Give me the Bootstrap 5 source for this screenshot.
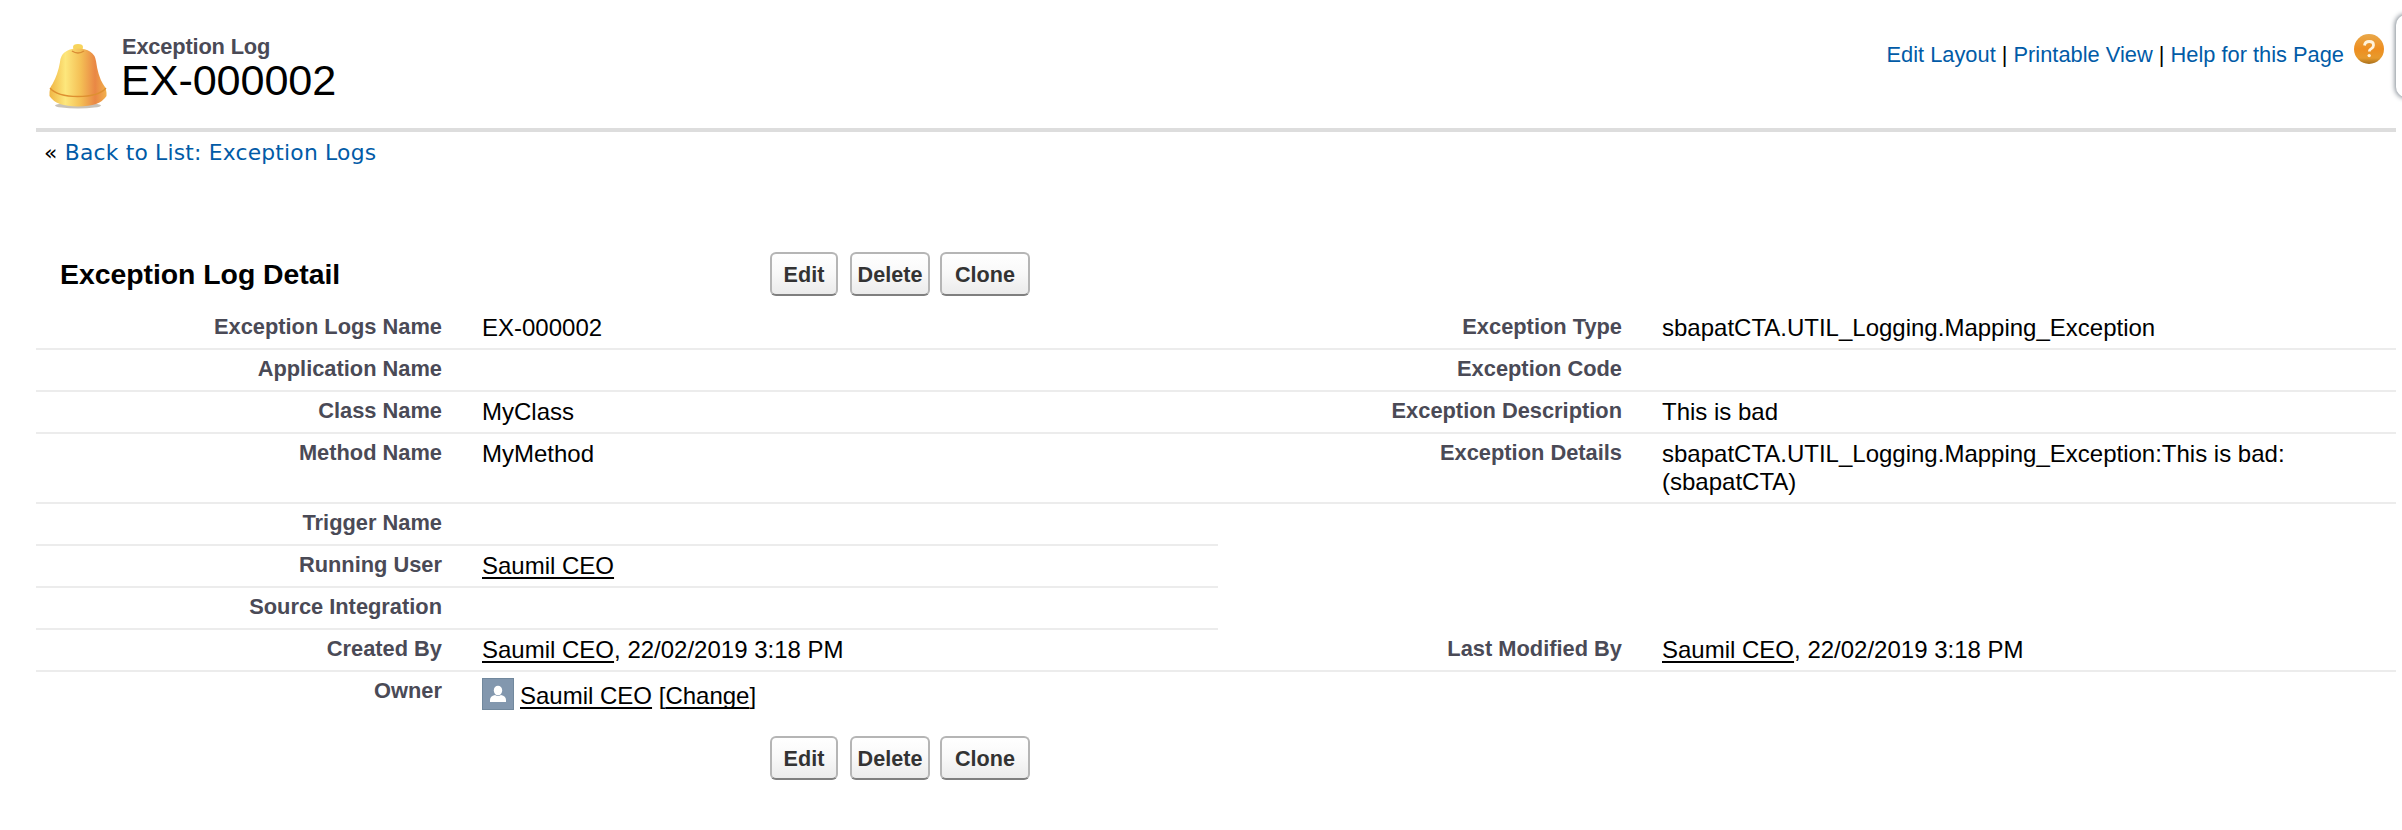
<!DOCTYPE html>
<html lang="en">
<head>
<meta charset="utf-8">
<title>Exception Log: EX-000002</title>
<link href="https://cdn.jsdelivr.net/npm/bootstrap@5.3.0/dist/css/bootstrap.min.css" rel="stylesheet">
<style>
body{font-family:"Liberation Sans",Arial,sans-serif;font-size:24px;line-height:28px;color:#000;background:#fff;height:830px;overflow:hidden}
.page{width:2360px;margin-left:36px}
a{color:#015ba7;text-decoration:none}
.head{height:132px;border-bottom:4px solid #d3d3d3;border-image:linear-gradient(#ccc 50%,#ddd 50%) 4}
.bell{width:64px;height:72px;margin:40px 0 0 10px}
.kind{font-size:21.84px;letter-spacing:-.17px;font-weight:700;color:#4a4a56;line-height:26px;margin:34px 0 0 12px}
.rec{font-size:43.2px;line-height:44px;letter-spacing:-.1px;font-weight:400;margin:-2px 0 0 11px}
.links{font-size:21.84px;line-height:26px;margin-right:11px}
.links .txt{margin-top:42px;white-space:pre}
.links svg{margin:33px 0 0 9px}
.back{font-family:"DejaVu Sans",Verdana,sans-serif;font-size:21.84px;letter-spacing:.2px;line-height:26px;margin:8px 0 0 8px;height:112px;white-space:pre}
.bar{height:44px}
.bar h2{font-size:28.4px;line-height:34px;letter-spacing:-.03px;font-weight:700;width:710px;margin:0 0 0 24px}
.bar.low{padding-left:734px}
.sf{height:44px;padding:1px 0 0;font-size:21.6px;line-height:38px;font-weight:700;color:#333;background:linear-gradient(#fff,#f9f9f9 45%,#ebebeb);border:2px solid #b5b5b5;border-bottom-color:#7f7f7f;border-radius:6px}
.w1{width:68px;margin-right:12px}.w2{width:80px;margin-right:10px}.w3{width:90px}
.grid{display:grid;grid-template-columns:425px 757px 423px 755px;margin-top:12px}
.grid>*{min-height:42px;border-bottom:2px solid #ececec}
.grid>.nb{border-color:transparent}
.lab{font-size:21.84px;font-weight:700;color:#4a4a56;text-align:right;padding:5px 19px 0 0}
.val{padding:6px 30px 6px 21px}
.val a{color:#000;text-decoration:underline 2px;text-underline-offset:3px;text-decoration-skip-ink:none}
.grid>.owner{height:64px;padding-top:6px}
.own{margin:4px 0 0 6px}
.side{position:absolute;left:2396px;top:15px;width:30px;height:82px;border-radius:10px;box-shadow:0 0 5px 1px #7d868f;background:#fff}
</style>
</head>
<body class="position-relative">
<div class="page">
<header class="head d-flex justify-content-between">
<div class="d-flex">
<svg class="bell" viewBox="0 0 64 72"><defs><linearGradient id="g"><stop offset="0" stop-color="#f0b544"/><stop offset=".28" stop-color="#fde77c"/><stop offset=".55" stop-color="#f4bf55"/><stop offset=".8" stop-color="#e98745"/><stop offset="1" stop-color="#f2b04c"/></linearGradient></defs>
<ellipse cx="32" cy="65.500" rx="23" ry="3" fill="#c8c2b8"/><path d="M27 7q0-3 5-3t5 3l-1 6h-8z" fill="#f7d45c"/><path d="M14 22Q15 9 31 8.500q17 0 19 12.500 2 15 7 23 4 5 3.500 12Q54 66.500 32 66.500T3.500 56q-.5-8 3-12Q12 34 14 22z" fill="url(#g)"/><path d="M4 48q7 8.500 28 8.500T60 48" fill="none" stroke="#de9030" stroke-width="1.300"/><path d="M26 11q6 4 12 0" fill="none" stroke="#d98c35" stroke-width="1.500"/></svg>
<div><div class="kind">Exception Log</div><h1 class="rec">EX-000002</h1></div>
</div>
<div class="links d-flex"><div class="txt"><a href="#">Edit Layout</a> | <a href="#">Printable View</a> | <a href="#">Help for this Page</a></div>
<svg width="32" height="32" viewBox="0 0 32 32"><defs><linearGradient id="h" x2="0" y2="1"><stop stop-color="#e8a84a"/><stop offset=".5" stop-color="#ee8e20"/><stop offset=".8" stop-color="#e79a2c"/><stop offset="1" stop-color="#a8701c"/></linearGradient></defs><circle cx="16" cy="16" r="15" fill="url(#h)"/><path d="M11.500 12.500q.5-4 4.800-4 4.200 0 4.200 3.700 0 2-2.200 3.400-2 1.200-2 3" fill="none" stroke="#fff3dc" stroke-width="2.800"/><circle cx="16.200" cy="22.600" r="1.700" fill="#fff3dc"/></svg></div>
</header>
<div class="back">« <a href="#">Back to List: Exception Logs</a></div>
<div class="bar d-flex align-items-center"><h2>Exception Log Detail</h2><button class="btn sf w1">Edit</button><button class="btn sf w2">Delete</button><button class="btn sf w3">Clone</button></div>
<main class="grid">
<div class="lab">Exception Logs Name</div><div class="val">EX-000002</div><div class="lab">Exception Type</div><div class="val">sbapatCTA.UTIL_Logging.Mapping_Exception</div>
<div class="lab">Application Name</div><div class="val"></div><div class="lab">Exception Code</div><div class="val"></div>
<div class="lab">Class Name</div><div class="val">MyClass</div><div class="lab">Exception Description</div><div class="val">This is bad</div>
<div class="lab">Method Name</div><div class="val">MyMethod</div><div class="lab">Exception Details</div><div class="val">sbapatCTA.UTIL_Logging.Mapping_Exception:This is bad:<br>(sbapatCTA)</div>
<div class="lab">Trigger Name</div><div class="val"></div><div class="nb"></div><div class="nb"></div>
<div class="lab">Running User</div><div class="val"><a href="#">Saumil CEO</a></div><div class="nb"></div><div class="nb"></div>
<div class="lab">Source Integration</div><div class="val"></div><div class="nb"></div><div class="nb"></div>
<div class="lab">Created By</div><div class="val"><a href="#">Saumil CEO</a>, 22/02/2019 3:18 PM</div><div class="lab">Last Modified By</div><div class="val"><a href="#">Saumil CEO</a>, 22/02/2019 3:18 PM</div>
<div class="lab nb">Owner</div><div class="val nb owner d-flex"><svg width="32" height="32" viewBox="0 0 32 32"><path fill="#8297ae" d="M0 0h32v32H0z"/><path d="M0 0h32v32H0z" fill="none" stroke="#71889d" stroke-width="2"/><ellipse cx="16" cy="12.500" rx="4.200" ry="4.800" fill="#fff"/><path d="M8 24v-2q0-4 5-5 3 2 6 0 5 1 5 5v2z" fill="#fff"/></svg><div class="own"><a href="#">Saumil CEO</a> [<a href="#">Change</a>]</div></div>
</main>
<div class="bar low d-flex"><button class="btn sf w1">Edit</button><button class="btn sf w2">Delete</button><button class="btn sf w3">Clone</button></div>
</div>
<div class="side"></div>
<script src="https://cdn.jsdelivr.net/npm/bootstrap@5.3.0/dist/js/bootstrap.bundle.min.js"></script>
</body>
</html>
